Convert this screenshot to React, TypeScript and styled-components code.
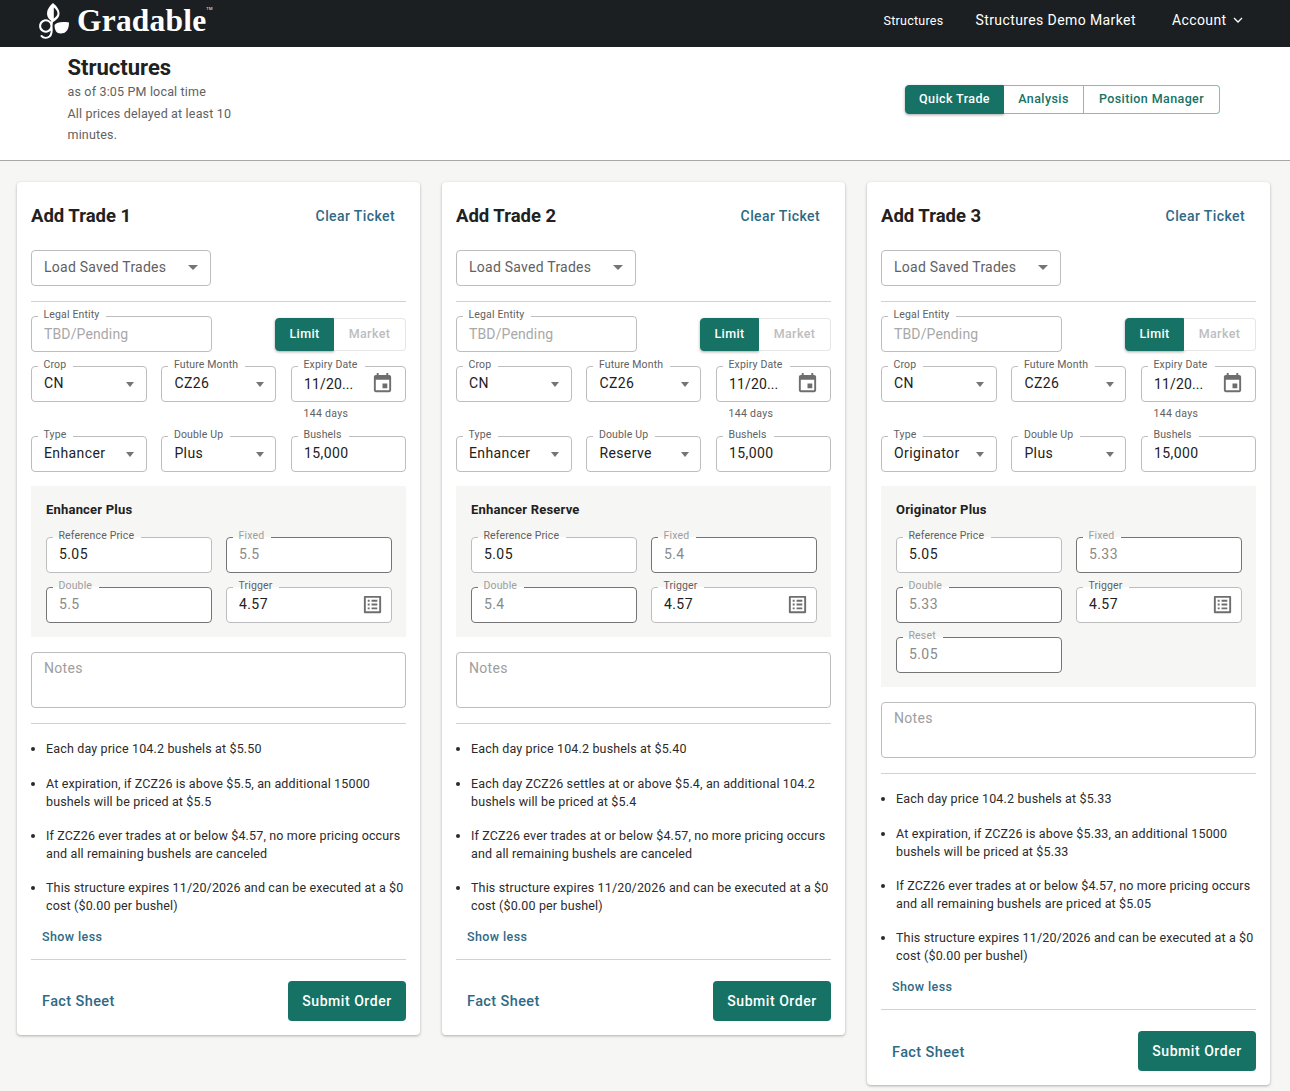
import React from "react";
import styled, { createGlobalStyle } from "styled-components";

const GlobalStyle = createGlobalStyle`
  html, body {
    margin: 0;
    padding: 0;
    background: #f6f6f4;
    font-family: Roboto, "Liberation Sans", sans-serif;
    color: #212529;
  }
  * {
    box-sizing: border-box;
  }
`;

const TopBar = styled.header`
  height: 47px;
  background: #1b1f22;
  display: flex;
  align-items: center;
  justify-content: space-between;
  padding: 0 46px 0 39px;
  color: #fff;
`;

const Brand = styled.div`
  display: flex;
  align-items: center;
  gap: 8px;
  margin-top: -6px;
`;

const BrandName = styled.span`
  font-family: "Liberation Serif", serif;
  font-size: 31.5px;
  font-weight: 700;
  line-height: 40px;
  letter-spacing: 0.2px;
`;

const Tm = styled.sup`
  font-family: Roboto, sans-serif;
  font-size: 4px;
  font-weight: 400;
  vertical-align: 21px;
  line-height: 0;
`;

const Nav = styled.nav`
  display: flex;
  align-items: center;
  gap: 32px;
  margin-top: -8px;
`;

const NavLink = styled.a<{ $small?: boolean }>`
  font-size: ${p => (p.$small ? "12.5px" : "14px")};
  font-weight: 400;
  letter-spacing: ${p => (p.$small ? "0.25px" : "0.4px")};
  display: flex;
  align-items: center;
  gap: 5.5px;
  margin-top: ${p => (p.$small ? "1px" : "0")};
`;

const AccountLink = styled(NavLink)`
  margin-left: 4px;
`;

const SubHeader = styled.section`
  height: 114px;
  background: #fff;
  border-bottom: 1px solid #a9a9a9;
  display: flex;
  justify-content: space-between;
  align-items: flex-start;
  padding: 7px 70px 0 67.5px;
`;

const SubHeaderText = styled.div`
  width: 180px;
`;

const PageTitle = styled.h1`
  margin: 0 0 -1px;
  font-size: 22px;
  line-height: 28px;
  font-weight: 700;
  color: #212121;
`;

const Delay = styled.p`
  margin: 0;
  font-size: 12.5px;
  line-height: 21.5px;
  letter-spacing: 0.17px;
  color: #616161;
`;

const Tabs = styled.div`
  display: flex;
  margin-top: 31px;
  height: 29px;
`;

const Tab = styled.button<{ $active?: boolean; $width: number }>`
  width: ${p => p.$width}px;
  font-family: inherit;
  font-size: 12.5px;
  font-weight: 500;
  letter-spacing: 0.4px;
  padding: 0 0 2px;
  cursor: pointer;
  background: ${p => (p.$active ? "#167264" : "#fff")};
  color: ${p => (p.$active ? "#fff" : "#167264")};
  border: 1px solid ${p => (p.$active ? "#167264" : "#8cb9b2")};
  border-left-width: ${p => (p.$active ? "1px" : "0")};
  box-shadow: ${p => (p.$active ? "0 1px 3px rgba(0,0,0,.35)" : "none")};
  &:first-child {
    border-radius: 4px 0 0 4px;
  }
  &:last-child {
    border-radius: 0 4px 4px 0;
  }
`;

const Board = styled.main`
  display: grid;
  grid-template-columns: repeat(3, 403px);
  column-gap: 22px;
  align-items: start;
  padding: 21px 0 5px 17px;
`;

const Card = styled.article`
  background: #fff;
  border-radius: 4px;
  box-shadow: 0 1px 3px rgba(0, 0, 0, 0.3);
  padding: 17px 14px 14px;
`;

const CardHead = styled.div`
  display: flex;
  justify-content: space-between;
  align-items: center;
  height: 34px;
  padding-right: 11px;
`;

const CardTitle = styled.h2`
  margin: 0;
  font-size: 18.5px;
  font-weight: 700;
  color: #212121;
`;

const TextLink = styled.a<{ $size?: number }>`
  font-size: ${p => p.$size || 14}px;
  font-weight: 500;
  letter-spacing: 0.4px;
  color: #2f6a85;
  cursor: pointer;
`;

const SavedSelect = styled.div`
  margin-top: 17px;
  width: 180px;
  height: 36px;
  border: 1px solid #bdbdbd;
  border-radius: 4px;
  display: flex;
  align-items: center;
  justify-content: space-between;
  padding: 0 12px 2px;
  font-size: 14px;
  letter-spacing: 0.25px;
  color: #616161;
`;

const Caret = styled.span`
  width: 0;
  height: 0;
  border-left: 5px solid transparent;
  border-right: 5px solid transparent;
  border-top: 5px solid #757575;
  flex: none;
`;

const Divider = styled.hr<{ $top: number; $bottom: number }>`
  margin: ${p => p.$top}px 0 ${p => p.$bottom}px;
  border: 0;
  border-top: 1px solid #d2d2d2;
`;

const TopRow = styled.div`
  display: flex;
  justify-content: space-between;
  align-items: flex-end;
`;

const Box = styled.fieldset<{ $strong?: boolean; $grow?: boolean }>`
  margin: 0;
  padding: 0 12px;
  height: 42px;
  min-width: 0;
  width: ${p => (p.$grow ? "181px" : "auto")};
  background: #fff;
  border: 1px solid ${p => (p.$strong ? "#757575" : "#bdbdbd")};
  border-radius: 4px;
  display: flex;
  align-items: center;
  justify-content: space-between;
`;

const BoxLabel = styled.legend<{ $muted?: boolean }>`
  margin-left: -6px;
  padding: 0 7px 2px 5.5px;
  font-size: 10.5px;
  line-height: 10px;
  letter-spacing: 0.15px;
  color: ${p => (p.$muted ? "#9e9e9e" : "#616161")};
`;

const BoxValue = styled.span<{ $muted?: boolean; $faint?: boolean; $drop?: boolean }>`
  margin-top: ${p => (p.$drop ? "-5px" : "-7px")};
  font-size: 14px;
  letter-spacing: ${p => (p.$drop ? "0.13px" : "0.4px")};
  white-space: nowrap;
  color: ${p => (p.$faint ? "#a8a8a8" : p.$muted ? "#8a8a8a" : "#212121")};
`;

const BoxIcon = styled.svg<{ $right: number }>`
  margin: -6px ${p => p.$right}px 0 0;
  width: 23px;
  height: 23px;
  fill: #6e6e6e;
  flex: none;
`;

const BoxCaret = styled(Caret)`
  margin: -4px -0.5px 0 0;
  border-left-width: 4.5px;
  border-right-width: 4.5px;
`;

const OrderToggle = styled.div`
  display: flex;
  height: 33px;
  margin-bottom: 1px;
`;

const OrderButton = styled.div<{ $active?: boolean }>`
  display: flex;
  align-items: center;
  justify-content: center;
  width: ${p => (p.$active ? "59px" : "72px")};
  padding-bottom: 2px;
  font-size: 12.5px;
  font-weight: 500;
  letter-spacing: 0.4px;
  color: ${p => (p.$active ? "#fff" : "#bdbdbd")};
  background: ${p => (p.$active ? "#167264" : "#fff")};
  border: 1px solid ${p => (p.$active ? "#167264" : "#e6e6e6")};
  border-left-width: ${p => (p.$active ? "1px" : "0")};
  border-radius: ${p => (p.$active ? "4px 0 0 4px" : "0 4px 4px 0")};
  box-shadow: ${p => (p.$active ? "0 1px 3px rgba(0,0,0,.35)" : "none")};
`;

const ThreeCol = styled.div`
  display: grid;
  grid-template-columns: 115.8px 115px 115px;
  column-gap: 14.6px;
  margin-top: 8px;
`;

const DaysHint = styled.div`
  grid-column: 3;
  height: 20px;
  padding: 5px 0 0 12.5px;
  font-size: 10.5px;
  line-height: 13px;
  letter-spacing: 0.3px;
  color: #616161;
`;

const HintRow = styled(ThreeCol)`
  margin-top: 0;
`;

const TypeRow = styled(ThreeCol)`
  margin-top: 8px;
`;

const Panel = styled.section`
  margin-top: 14px;
  padding: 17px 14px 14px 15px;
  background: #f6f6f4;
`;

const PanelTitle = styled.h3`
  margin: 0 0 14px;
  font-size: 13px;
  line-height: 14px;
  font-weight: 700;
  letter-spacing: 0.2px;
  color: #212121;
`;

const PriceGrid = styled.div`
  display: grid;
  grid-template-columns: 166px 166px;
  column-gap: 14px;
  row-gap: 8.2px;
`;

const Notes = styled.div`
  margin-top: 15px;
  height: 56px;
  border: 1px solid #bdbdbd;
  border-radius: 4px;
  padding: 7px 12px;
  font-size: 14px;
  line-height: 16px;
  letter-spacing: 0.3px;
  color: #9e9e9e;
`;

const Terms = styled.ul`
  margin: 0;
  padding: 0 0 0 15px;
  font-size: 12.5px;
  line-height: 18px;
  letter-spacing: 0.15px;
  color: #2b2b2b;
`;

const Term = styled.li`
  margin-bottom: 16.1px;
  &:first-child {
    margin-bottom: 16.8px;
  }
  &:last-child {
    margin-bottom: 0;
  }
`;

const ShowLess = styled.div`
  margin-top: 11.8px;
  padding-left: 11px;
  height: 18px;
  line-height: 18px;
`;

const CardFoot = styled.div`
  display: flex;
  justify-content: space-between;
  align-items: center;
  padding-left: 11px;
`;

const FactSheet = styled(TextLink)`
  margin-top: 2px;
`;

const SubmitButton = styled.button`
  width: 118px;
  height: 40px;
  border: 0;
  border-radius: 4px;
  background: #167264;
  color: #fff;
  font-family: inherit;
  font-size: 14px;
  font-weight: 500;
  letter-spacing: 0.55px;
  cursor: pointer;
`;

const GradableMark = () => (
  <svg width="30" height="36" viewBox="0 0 30 36" fill="#fff">
    <path
      fillRule="evenodd"
      d="M14 0 C17.500 3 20.500 6.500 20.500 10.500 C20.500 14 18 17 14 19 C10 17 8 14 8 10.500 C8 6.500 10.500 3 14 0 Z M14.800 4.500 V15.500 C17 14 18.500 12.500 18.500 10.300 C18.500 8.200 16.800 6 14.800 4.500 Z"
    />
    <path d="M15.500 22 C17.500 19.500 22 18.300 30 19.500 C30 25.500 28 30.500 21.500 30.500 C17.500 30.500 15.500 27 15.500 22 Z" />
    <path
      fill="none"
      stroke="#fff"
      strokeWidth="2"
      strokeLinecap="round"
      d="M12.500 23 A5.700 5.700 0 1 1 12.500 22.900 M13.500 17.500 C13 18.500 12.500 20 12.500 23 C13.200 29 13 31.500 10.500 33.500 C8 35.300 4.500 35 2.500 33"
    />
  </svg>
);

const CalendarIcon = () => (
  <BoxIcon $right={-1} viewBox="0 0 24 24">
    <path d="M17 12h-5v5h5v-5zM16 1v2H8V1H6v2H5c-1.110 0-1.990.9-1.990 2L3 19c0 1.100.89 2 2 2h14c1.100 0 2-.9 2-2V5c0-1.100-.9-2-2-2h-1V1h-2zm3 18H5V8h14v11z" />
  </BoxIcon>
);

const ListIcon = () => (
  <BoxIcon $right={-5} viewBox="0 0 24 24">
    <path d="M19 5v14H5V5h14m1.100-2H3.900c-.5 0-.9.4-.9.9v16.200c0 .4.4.9.9.9h16.200c.4 0 .9-.5.9-.9V3.900c0-.5-.5-.9-.9-.9zM11 7h6v2h-6V7zm0 4h6v2h-6v-2zm0 4h6v2h-6zM7 7h2v2H7zm0 4h2v2H7zm0 4h2v2H7z" />
  </BoxIcon>
);

const Chevron = () => (
  <svg width="12" height="12" viewBox="0 0 12 12" fill="none" stroke="#fff" strokeWidth="1.300">
    <path d="M2 4 L6 8 L10 4" />
  </svg>
);

interface ITrade {
  id: number;
  type: string;
  doubleUp: string;
  fixed: string;
  double: string;
  reset?: string;
  terms: string[];
}

const trades: ITrade[] = [
  {
    id: 1,
    type: "Enhancer",
    doubleUp: "Plus",
    fixed: "5.5",
    double: "5.5",
    terms: [
      "Each day price 104.2 bushels at $5.50",
      "At expiration, if ZCZ26 is above $5.5, an additional 15000 bushels will be priced at $5.5",
      "If ZCZ26 ever trades at or below $4.57, no more pricing occurs and all remaining bushels are canceled",
      "This structure expires 11/20/2026 and can be executed at a $0 cost ($0.00 per bushel)"
    ]
  },
  {
    id: 2,
    type: "Enhancer",
    doubleUp: "Reserve",
    fixed: "5.4",
    double: "5.4",
    terms: [
      "Each day price 104.2 bushels at $5.40",
      "Each day ZCZ26 settles at or above $5.4, an additional 104.2 bushels will be priced at $5.4",
      "If ZCZ26 ever trades at or below $4.57, no more pricing occurs and all remaining bushels are canceled",
      "This structure expires 11/20/2026 and can be executed at a $0 cost ($0.00 per bushel)"
    ]
  },
  {
    id: 3,
    type: "Originator",
    doubleUp: "Plus",
    fixed: "5.33",
    double: "5.33",
    reset: "5.05",
    terms: [
      "Each day price 104.2 bushels at $5.33",
      "At expiration, if ZCZ26 is above $5.33, an additional 15000 bushels will be priced at $5.33",
      "If ZCZ26 ever trades at or below $4.57, no more pricing occurs and all remaining bushels are priced at $5.05",
      "This structure expires 11/20/2026 and can be executed at a $0 cost ($0.00 per bushel)"
    ]
  }
];

const SelectField: React.FunctionComponent<{ label: string; value: string }> = ({ label, value }) => (
  <Box>
    <BoxLabel>{label}</BoxLabel>
    <BoxValue>{value}</BoxValue>
    <BoxCaret />
  </Box>
);

const LockedField: React.FunctionComponent<{ label: string; value: string }> = ({ label, value }) => (
  <Box $strong>
    <BoxLabel $muted>{label}</BoxLabel>
    <BoxValue $muted>{value}</BoxValue>
  </Box>
);

const TradeCard: React.FunctionComponent<{ trade: ITrade }> = ({ trade }) => (
  <Card>
    <CardHead>
      <CardTitle>Add Trade {trade.id}</CardTitle>
      <TextLink>Clear Ticket</TextLink>
    </CardHead>
    <SavedSelect>
      Load Saved Trades
      <Caret />
    </SavedSelect>
    <Divider $top={15} $bottom={8} />
    <TopRow>
      <Box $grow>
        <BoxLabel>Legal Entity</BoxLabel>
        <BoxValue $faint $drop>
          TBD/Pending
        </BoxValue>
      </Box>
      <OrderToggle>
        <OrderButton $active>Limit</OrderButton>
        <OrderButton>Market</OrderButton>
      </OrderToggle>
    </TopRow>
    <ThreeCol>
      <SelectField label="Crop" value="CN" />
      <SelectField label="Future Month" value="CZ26" />
      <Box>
        <BoxLabel>Expiry Date</BoxLabel>
        <BoxValue $drop>11/20...</BoxValue>
        <CalendarIcon />
      </Box>
    </ThreeCol>
    <HintRow>
      <DaysHint>144 days</DaysHint>
    </HintRow>
    <TypeRow>
      <SelectField label="Type" value={trade.type} />
      <SelectField label="Double Up" value={trade.doubleUp} />
      <Box>
        <BoxLabel>Bushels</BoxLabel>
        <BoxValue>15,000</BoxValue>
      </Box>
    </TypeRow>
    <Panel>
      <PanelTitle>
        {trade.type} {trade.doubleUp}
      </PanelTitle>
      <PriceGrid>
        <Box>
          <BoxLabel>Reference Price</BoxLabel>
          <BoxValue>5.05</BoxValue>
        </Box>
        <LockedField label="Fixed" value={trade.fixed} />
        <LockedField label="Double" value={trade.double} />
        <Box>
          <BoxLabel>Trigger</BoxLabel>
          <BoxValue>4.57</BoxValue>
          <ListIcon />
        </Box>
        {trade.reset && <LockedField label="Reset" value={trade.reset} />}
      </PriceGrid>
    </Panel>
    <Notes>Notes</Notes>
    <Divider $top={15} $bottom={16} />
    <Terms>
      {trade.terms.map(term => (
        <Term key={term}>{term}</Term>
      ))}
    </Terms>
    <ShowLess>
      <TextLink $size={12.5}>Show less</TextLink>
    </ShowLess>
    <Divider $top={14} $bottom={21} />
    <CardFoot>
      <FactSheet $size={14.5}>Fact Sheet</FactSheet>
      <SubmitButton>Submit Order</SubmitButton>
    </CardFoot>
  </Card>
);

const App = () => (
  <>
    <GlobalStyle />
    <TopBar>
      <Brand>
        <GradableMark />
        <BrandName>
          Gradable<Tm>TM</Tm>
        </BrandName>
      </Brand>
      <Nav>
        <NavLink $small>Structures</NavLink>
        <NavLink>Structures Demo Market</NavLink>
        <AccountLink>
          Account <Chevron />
        </AccountLink>
      </Nav>
    </TopBar>
    <SubHeader>
      <SubHeaderText>
        <PageTitle>Structures</PageTitle>
        <Delay>as of 3:05 PM local time</Delay>
        <Delay>All prices delayed at least 10 minutes.</Delay>
      </SubHeaderText>
      <Tabs>
        <Tab $active $width={99}>
          Quick Trade
        </Tab>
        <Tab $width={80}>Analysis</Tab>
        <Tab $width={136}>Position Manager</Tab>
      </Tabs>
    </SubHeader>
    <Board>
      {trades.map(trade => (
        <TradeCard key={trade.id} trade={trade} />
      ))}
    </Board>
  </>
);

export default App;
